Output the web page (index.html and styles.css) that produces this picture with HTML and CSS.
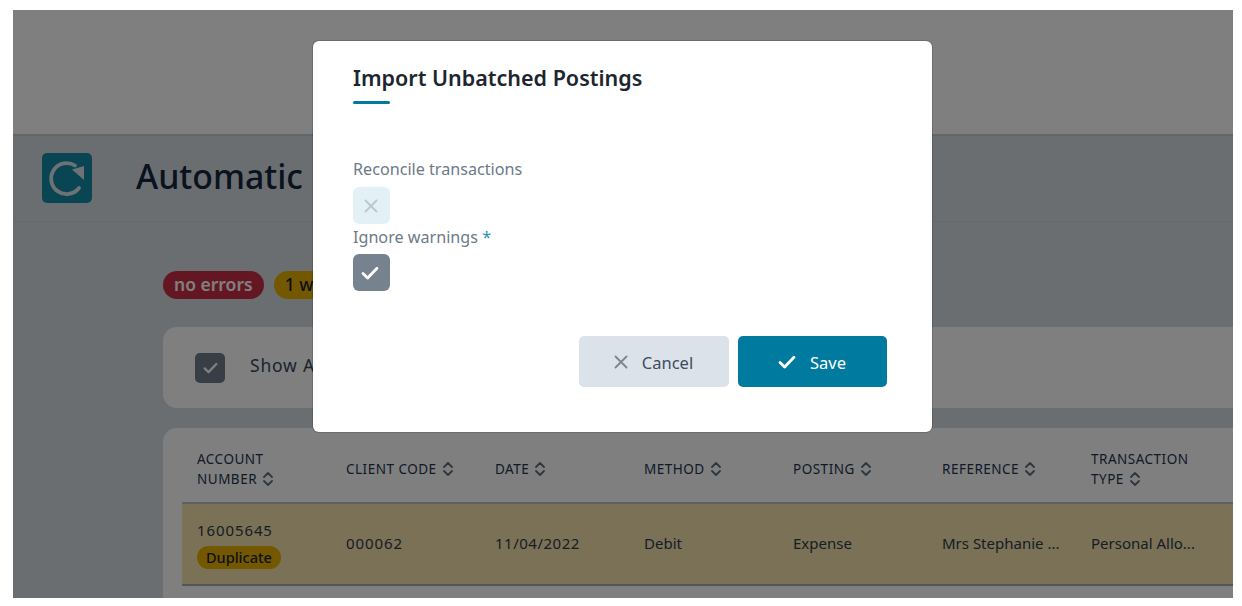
FILE: index.html
```html
<!DOCTYPE html>
<html lang="en">
<head>
<meta charset="utf-8">
<title>Import Unbatched Postings</title>
<link rel="stylesheet" href="styles.css">
</head>
<body>
<svg class="defs" width="0" height="0" aria-hidden="true">
  <symbol id="sort" viewBox="0 0 12 16"><path d="M2 6l4-4 4 4M2 10l4 4 4-4" fill="none" stroke="currentColor" stroke-width="1.8" stroke-linecap="round" stroke-linejoin="round"/></symbol>
  <symbol id="check" viewBox="0 0 18 14"><path d="M2 7.500l4.600 4.500L16 2.200" fill="none" stroke="currentColor" stroke-width="2.800" stroke-linecap="round" stroke-linejoin="round"/></symbol>
  <symbol id="cross" viewBox="0 0 14 14"><path d="M1.500 1.500l11 11M12.500 1.500l-11 11" fill="none" stroke="currentColor" stroke-width="1.900" stroke-linecap="round"/></symbol>
</svg>
<div class="shot">
  <div class="app">
    <div class="topbar"></div>
    <header class="pagehead">
      <span class="pageicon">
        <svg viewBox="0 0 50 50" width="50" height="50"><path d="M37 35A15.500 15.500 0 1 1 33 12.500" fill="none" stroke="currentColor" stroke-width="3.800" stroke-linecap="round"/><path d="M30 16.500L42 13V27Z" fill="currentColor"/></svg>
      </span>
      <h1 class="pagetitle">Automatic</h1>
    </header>
    <main class="content">
      <div class="badges">
        <span class="pill pill-red">no errors</span>
        <span class="pill pill-amber">1 warning</span>
      </div>
      <section class="panel filter">
        <span class="bgcheck"><svg width="15" height="12"><use href="#check"/></svg></span>
        <span class="filterlabel">Show All</span>
      </section>
      <section class="panel tablepanel">
        <div class="grid headrow">
          <div class="th">Account<br>Number <svg class="sort"><use href="#sort"/></svg></div>
          <div class="th">Client Code <svg class="sort"><use href="#sort"/></svg></div>
          <div class="th">Date <svg class="sort"><use href="#sort"/></svg></div>
          <div class="th">Method <svg class="sort"><use href="#sort"/></svg></div>
          <div class="th">Posting <svg class="sort"><use href="#sort"/></svg></div>
          <div class="th">Reference <svg class="sort"><use href="#sort"/></svg></div>
          <div class="th">Transaction<br>Type <svg class="sort"><use href="#sort"/></svg></div>
          <div class="th"></div>
        </div>
        <div class="grid datarow">
          <div class="td td-stack"><span class="num">16005645</span><span class="dup">Duplicate</span></div>
          <div class="td num">000062</div>
          <div class="td date">11/04/2022</div>
          <div class="td">Debit</div>
          <div class="td">Expense</div>
          <div class="td">Mrs Stephanie ...</div>
          <div class="td">Personal Allo...</div>
          <div class="td"></div>
        </div>
      </section>
    </main>
  </div>
  <div class="backdrop"></div>
  <div class="modal">
    <h2 class="modaltitle">Import Unbatched Postings</h2>
    <div class="rule"></div>
    <div class="field first">
      <div class="label">Reconcile transactions</div>
      <span class="box box-off"><svg width="14" height="14"><use href="#cross"/></svg></span>
    </div>
    <div class="field">
      <div class="label">Ignore warnings <span class="req">*</span></div>
      <span class="box box-on"><svg width="18" height="14"><use href="#check"/></svg></span>
    </div>
    <div class="actions">
      <button class="btn btn-cancel"><svg width="14" height="14"><use href="#cross"/></svg><span>Cancel</span></button>
      <button class="btn btn-save"><svg width="18" height="14"><use href="#check"/></svg><span>Save</span></button>
    </div>
  </div>
</div>
</body>
</html>
```
FILE: styles.css
```css
* { box-sizing: border-box; }
html, body { margin: 0; height: 100%; background: #fff; overflow: hidden; }
.defs { position: absolute; }
.shot {
  position: relative;
  width: 1220px;
  height: 588px;
  margin: 10px 0 0 13px;
  overflow: hidden;
  font-family: "Noto Sans", sans-serif;
}
.app { width: 100%; height: 100%; background: #d6dce0; display: flex; flex-direction: column; }
.topbar { height: 126px; flex: none; background: #fff; border-bottom: 2px solid #c4ccd2; }
.pagehead {
  height: 86px;
  flex: none;
  display: flex;
  align-items: center;
  padding: 0 0 2px 29px;
  border-bottom: 1px solid #cdd3d8;
}
.pageicon {
  width: 50px;
  height: 50px;
  border-radius: 5px;
  background: #148ba8;
  color: #dce4ea;
  display: block;
}
.pageicon svg { display: block; }
.pagetitle {
  margin: 0 0 2px 44px;
  font: 500 33.800px/1 "Noto Sans", sans-serif;
  color: #14253f;
  white-space: nowrap;
}
.content { padding: 49px 0 0 150px; width: 1300px; }
.badges { display: flex; gap: 10px; height: 28px; align-items: stretch; }
.pill {
  display: flex;
  align-items: center;
  padding: 0 11px 2px;
  border-radius: 14px;
  font-size: 17.500px;
  font-weight: 600;
}
.pill-red { background: #c92f45; color: #fff; }
.pill-amber { background: #e6b000; color: #1b2230; font-weight: 500; }
.panel { background: #fff; border-radius: 14px; }
.filter {
  margin-top: 28px;
  height: 81px;
  display: flex;
  align-items: center;
  padding-left: 32px;
}
.bgcheck {
  width: 30px;
  height: 30px;
  border-radius: 5px;
  background: #6f7c8b;
  color: #fff;
  display: flex;
  align-items: center;
  justify-content: center;
}
.filterlabel { margin-left: 25px; padding-bottom: 6px; font-size: 17.500px; letter-spacing: .8px; color: #34475f; }
.tablepanel { margin-top: 20px; height: 300px; padding-left: 19px; }
.grid { display: grid; grid-template-columns: repeat(7, 149px) 100px; }
.headrow { height: 76px; padding-top: 8px; border-bottom: 2px solid #b9c1c8; align-items: center; }
.th {
  padding-left: 15px;
  font-size: 13.500px;
  line-height: 20px;
  letter-spacing: .5px;
  text-transform: uppercase;
  font-weight: 400;
  color: #24344f;
  white-space: nowrap;
}
.sort { width: 12px; height: 16px; vertical-align: -3px; color: #5f6e7c; margin-left: 1px; }
.datarow { height: 82px; padding-bottom: 2px; background: #f5e3ac; border-bottom: 2px solid #a5adb3; align-items: center; }
.td { padding-left: 15px; font-size: 15px; color: #2d3a4c; white-space: nowrap; }
.num { letter-spacing: .9px; }
.date { letter-spacing: .5px; }
.td-stack { display: flex; flex-direction: column; align-items: flex-start; gap: 6px; padding-top: 3px; }
.dup {
  background: #e6b000;
  color: #1b2230;
  border-radius: 11.500px;
  padding: 0 9px;
  font-size: 14.500px;
  line-height: 23px;
  font-weight: 500;
}
.backdrop { position: absolute; inset: 0; background: rgba(0, 0, 0, .5); }
.modal {
  position: absolute;
  left: 300px;
  top: 31px;
  width: 619px;
  height: 391px;
  background: #fff;
  border-radius: 6px;
  box-shadow: 0 0 0 1px rgba(0, 0, 0, .15);
  padding: 22px 40px 0;
}
.modaltitle { margin: 0; font: 600 21.500px/30px "Noto Sans", sans-serif; color: #1d2530; }
.rule { width: 37px; height: 3px; margin-top: 8px; border-radius: 2px; background: #007a9f; }
.first { margin-top: 52px; }
.label { font-size: 16.150px; line-height: 26px; color: #6c7a88; }
.first .label { margin-bottom: 5px; }
.field:not(.first) .label { margin-bottom: 4px; }
.req { color: #2b8eb3; }
.box {
  width: 37px;
  height: 37px;
  border-radius: 6px;
  display: flex;
  align-items: center;
  justify-content: center;
}
.box-off { background: #e3f1f7; color: #bcc8cf; }
.box-off svg { margin-right: 1px; }
.box-on { background: #76828e; color: #fff; }
.box-on svg { margin-right: 3px; }
.actions { margin-top: 45px; margin-right: 5px; display: flex; justify-content: flex-end; gap: 9px; }
.btn {
  width: 150px;
  height: 51px;
  border: 0;
  border-radius: 5px;
  display: flex;
  align-items: center;
  justify-content: center;
  gap: 14px;
  padding: 1px 1px 0 0;
  font: 400 16.500px "Noto Sans", sans-serif;
}
.btn-cancel { background: #dce2ea; color: #3d4d60; }
.btn-cancel svg { color: #7d8791; }
.btn-save { width: 149px; background: #007a9f; color: #fff; }
```
